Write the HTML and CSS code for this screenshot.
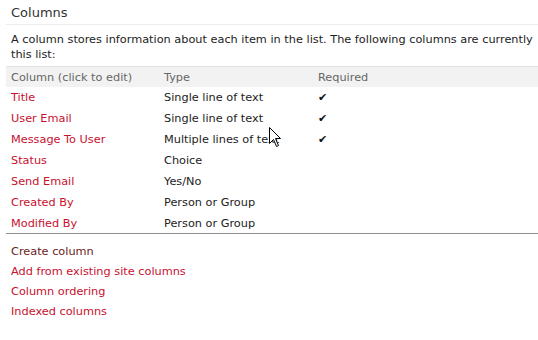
FILE: index.html
```html
<!DOCTYPE html>
<html lang="en">
<head>
  <meta charset="UTF-8">
  <title>List Settings - Columns</title>
  <link rel="stylesheet" href="styles.css">
</head>
<body>
<div class="settings">
  <h2 class="section-title">Columns</h2>
  <p class="section-desc">A column stores information about each item in the list. The following columns are currently this list:</p>

  <table class="columns">
    <thead>
      <tr>
        <th class="col-name">Column (click to edit)</th>
        <th class="col-type">Type</th>
        <th class="col-req">Required</th>
      </tr>
    </thead>
    <tbody>
      <tr><td><a href="#">Title</a></td><td>Single line of text</td><td><span class="check">&#10004;</span></td></tr>
      <tr><td><a href="#">User Email</a></td><td>Single line of text</td><td><span class="check">&#10004;</span></td></tr>
      <tr><td><a href="#">Message To User</a></td><td>Multiple lines of text</td><td><span class="check">&#10004;</span></td></tr>
      <tr><td><a href="#">Status</a></td><td>Choice</td><td></td></tr>
      <tr><td><a href="#">Send Email</a></td><td>Yes/No</td><td></td></tr>
      <tr><td><a href="#">Created By</a></td><td>Person or Group</td><td></td></tr>
      <tr><td><a href="#">Modified By</a></td><td>Person or Group</td><td></td></tr>
    </tbody>
  </table>

  <ul class="actions">
    <li><a href="#" class="visited">Create column</a></li>
    <li><a href="#">Add from existing site columns</a></li>
    <li><a href="#">Column ordering</a></li>
    <li><a href="#">Indexed columns</a></li>
  </ul>
</div>

<!-- mouse pointer caught in the screenshot -->
<svg class="pointer" width="13" height="21" viewBox="0 0 13 21">
  <path d="M0.5 0.5 L0.5 16.5 L4.5 12.5 L7.5 19.5 L9.5 18.5 L6.5 11.5 L11.5 11.5 Z" fill="#fff" stroke="#000" stroke-width="1"/>
</svg>
</body>
</html>
```

FILE: styles.css
```css
html, body {
  margin: 0;
  padding: 0;
  background: #fff;
  overflow: hidden;
}

body {
  font-family: "DejaVu Sans", Verdana, sans-serif;
  font-size: 11.3px;
  color: #222;
}

.settings {
  padding: 0 0 0 6px;
}

.section-title {
  margin: 0;
  padding: 5px 0 4px 5px;
  font-size: 13px;
  font-weight: normal;
  color: #333;
  border-bottom: 1px solid #ececec;
}

.section-desc {
  margin: 0;
  padding: 7px 0 4px 5px;
  line-height: 15px;
  width: 527px;
}

.columns {
  width: 100%;
  border-collapse: collapse;
}

.columns th {
  background: #f2f2f2;
  border-top: 1px solid #e2e2e2;
  color: #666;
  font-weight: normal;
  text-align: left;
  height: 20px;
  padding: 0 0 0 5px;
}

.columns td {
  height: 21px;
  padding: 0 0 0 5px;
  white-space: nowrap;
}

.columns tbody tr:last-child td {
  border-bottom: 1px solid #909090;
  height: 20px;
}

.col-name { width: 148px; }
.col-type { width: 149px; }

.columns a,
.actions a {
  color: #c8102e;
  text-decoration: none;
}

.check {
  font-size: 11px;
  color: #111;
}

.actions {
  list-style: none;
  margin: 0;
  padding: 8px 0 0 5px;
}

.actions li {
  height: 20px;
  line-height: 20px;
}

.actions a.visited {
  color: #6b1b1b;
}

.pointer {
  position: absolute;
  left: 269px;
  top: 127px;
}
```
